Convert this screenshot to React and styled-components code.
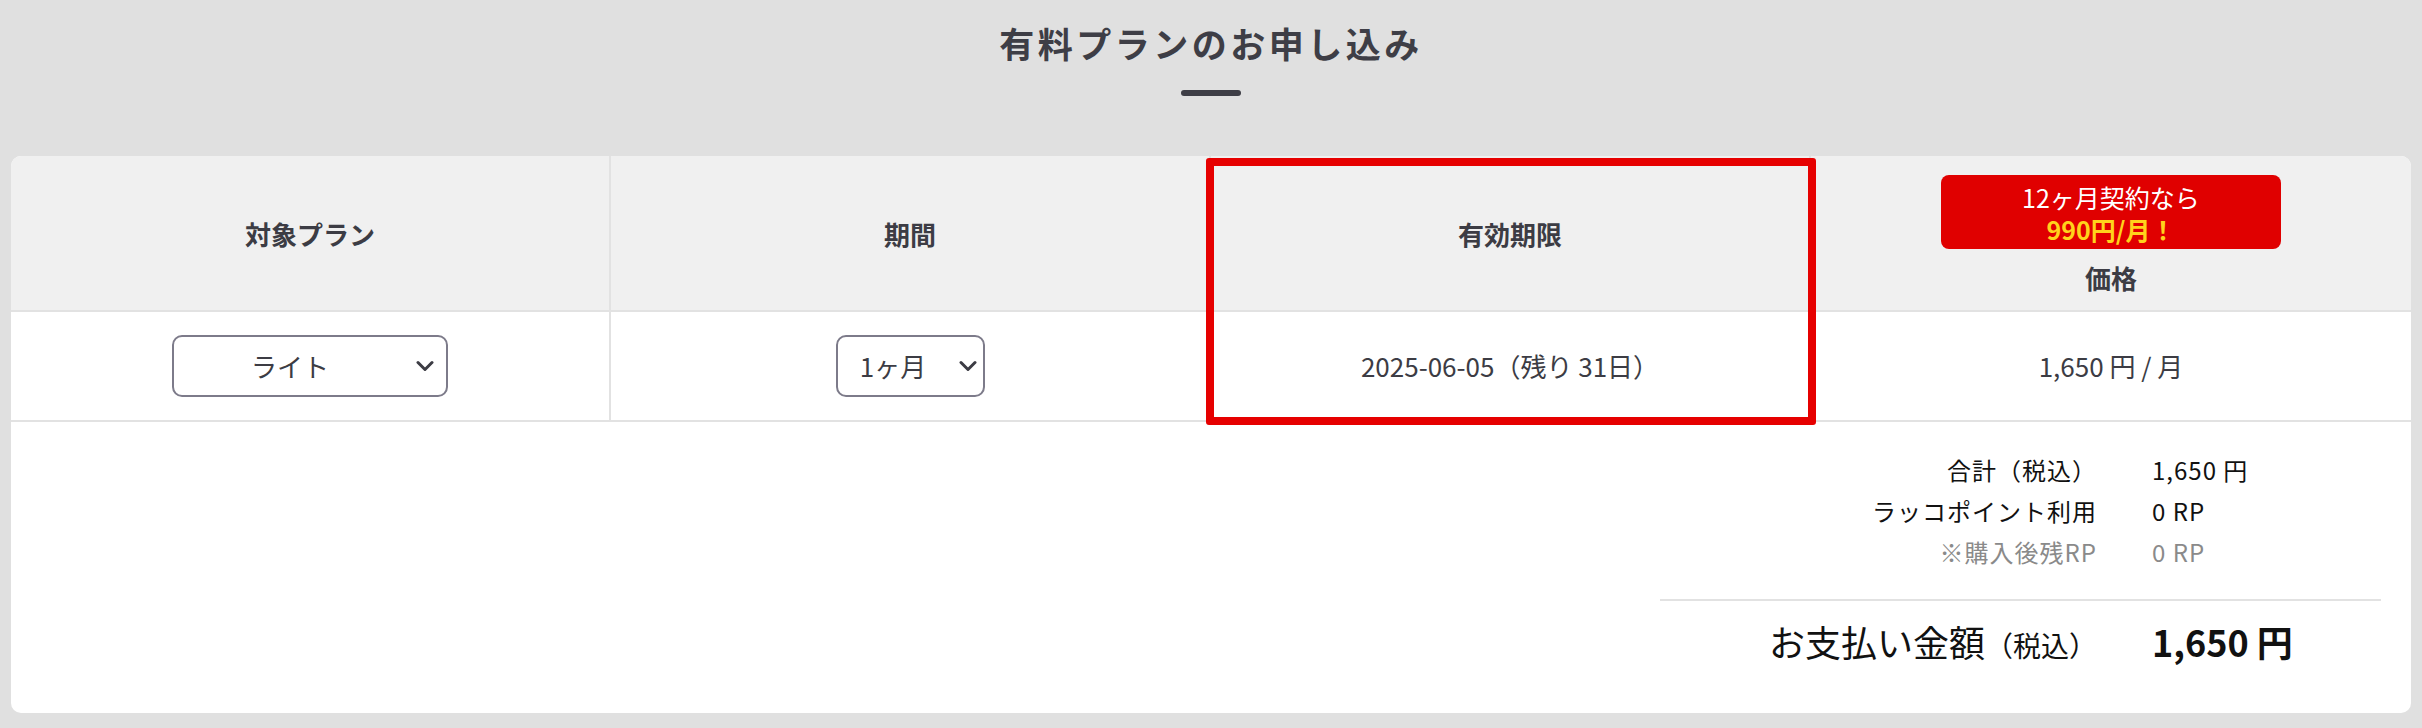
import React from "react";
import styled, { createGlobalStyle } from "styled-components";

const GlobalStyle = createGlobalStyle`
  * { box-sizing: border-box; }
  html, body { margin: 0; padding: 0; }
  body {
    background: #e0e0e0;
    font-family: "Noto Sans CJK JP", "Noto Sans", "Liberation Sans", sans-serif;
    color: #3c3c44;
  }
`;

const Page = styled.main`
  padding: 18px 11px 16px;
`;

const Title = styled.h1`
  margin: 0;
  text-align: center;
  font-size: 35px;
  line-height: 50px;
  font-weight: 700;
  letter-spacing: 3.5px;
  color: #3e3e46;
`;

const TitleBar = styled.div`
  width: 60px;
  height: 6px;
  border-radius: 3px;
  background: #3e3e46;
  margin: 22px auto 60px;
`;

const Card = styled.section`
  background: #fff;
  border-radius: 10px;
  overflow: hidden;
`;

const PlanTable = styled.div`
  display: grid;
  grid-template-columns: repeat(4, 1fr);
  grid-template-rows: 156px 110px;
`;

const Cell = styled.div`
  grid-column: ${(p) => p.$col};
  grid-row: ${(p) => p.$row};
  display: flex;
  flex-direction: column;
  align-items: center;
  justify-content: center;
  border-bottom: 2px solid #e2e2e2;
  border-right: ${(p) => (p.$col < 4 ? "2px solid #e2e2e2" : "none")};
`;

const HeadCell = styled(Cell)`
  background: #f0f0f0;
  gap: 9px;
  padding-top: ${(p) => p.$padTop || 0}px;
`;

const BodyCell = styled(Cell)`
  background: #fff;
  font-size: 26px;
  line-height: 38px;
  color: #3c3c44;
`;

const HeadLabel = styled.span`
  font-size: 26px;
  line-height: 39px;
  font-weight: 700;
  color: #3c3c44;
`;

const Highlight = styled.div`
  grid-column: 3;
  grid-row: 1 / span 2;
  margin: 2px -5px -3px -5px;
  border: 8px solid #e60000;
  border-radius: 3px;
  pointer-events: none;
  z-index: 1;
`;

const Badge = styled.div`
  width: 340px;
  height: 74px;
  border-radius: 8px;
  background: #e00000;
  padding: 6px 0 4px;
  display: flex;
  flex-direction: column;
  align-items: center;
  justify-content: center;
  font-size: 25px;
  line-height: 32px;
`;

const BadgeLine = styled.span`
  display: block;
  color: ${(p) => (p.$accent ? "#ffd21c" : "#ffffff")};
  font-weight: ${(p) => (p.$accent ? 700 : 400)};
`;

const SelectBox = styled.div`
  width: ${(p) => p.$width}px;
  height: 62px;
  border: 2px solid #7d7b8a;
  border-radius: 10px;
  display: flex;
  align-items: center;
  padding-right: ${(p) => p.$pr}px;
  font-size: 26px;
  color: #3c3c44;
  background: #fff;
`;

const SelectText = styled.span`
  flex: 1;
  text-align: center;
`;

const Chevron = styled.svg`
  width: 18px;
  height: 12px;
  margin-left: 10px;
  flex: none;
`;

const Summary = styled.div`
  display: flex;
  justify-content: flex-end;
  padding: 27px 30px 40px;
`;

const SummaryGrid = styled.div`
  width: 721px;
  display: grid;
  grid-template-columns: 437px 1fr;
  column-gap: 55px;
  font-size: 24px;
  line-height: 41px;
  letter-spacing: 1px;
`;

const SumLabel = styled.div`
  text-align: right;
  color: ${(p) => (p.$muted ? "#8a8a8a" : "#111")};
`;

const SumValue = styled.div`
  color: ${(p) => (p.$muted ? "#8a8a8a" : "#111")};
`;

const Divider = styled.div`
  grid-column: 1 / -1;
  height: 2px;
  background: #e2e2e2;
  margin: 27px 0 12px;
`;

const TotalLabel = styled.div`
  text-align: right;
  font-size: 36px;
  line-height: 56px;
  letter-spacing: 0;
  color: #111;
`;

const TaxNote = styled.span`
  font-size: 28px;
`;

const TotalValue = styled.div`
  font-size: 36px;
  line-height: 56px;
  font-weight: 700;
  letter-spacing: 0;
  color: #111;
`;

const ChevronIcon = () => (
  <Chevron viewBox="0 0 18 12" aria-hidden="true">
    <polyline
      points="2,2.5 9,9.5 16,2.5"
      fill="none"
      stroke="#3c3c44"
      strokeWidth="3"
      strokeLinecap="round"
      strokeLinejoin="round"
    />
  </Chevron>
);

const Select = ({ value, width, pr }) => (
  <SelectBox $width={width} $pr={pr} role="combobox">
    <SelectText>{value}</SelectText>
    <ChevronIcon />
  </SelectBox>
);

export default function App() {
  return (
    <>
      <GlobalStyle />
      <Page>
        <Title>有料プランのお申し込み</Title>
        <TitleBar />
        <Card>
          <PlanTable>
            <HeadCell $col={1} $row={1}>
              <HeadLabel>対象プラン</HeadLabel>
            </HeadCell>
            <HeadCell $col={2} $row={1}>
              <HeadLabel>期間</HeadLabel>
            </HeadCell>
            <HeadCell $col={3} $row={1}>
              <HeadLabel>有効期限</HeadLabel>
            </HeadCell>
            <HeadCell $col={4} $row={1} $padTop={5}>
              <Badge>
                <BadgeLine>12ヶ月契約なら</BadgeLine>
                <BadgeLine $accent>990円/月！</BadgeLine>
              </Badge>
              <HeadLabel>価格</HeadLabel>
            </HeadCell>
            <BodyCell $col={1} $row={2}>
              <Select value="ライト" width={276} pr={12} />
            </BodyCell>
            <BodyCell $col={2} $row={2}>
              <Select value="1ヶ月" width={149} pr={6} />
            </BodyCell>
            <BodyCell $col={3} $row={2}>2025-06-05（残り 31日）</BodyCell>
            <BodyCell $col={4} $row={2}>1,650 円 / 月</BodyCell>
            <Highlight />
          </PlanTable>
          <Summary>
            <SummaryGrid>
              <SumLabel>合計（税込）</SumLabel>
              <SumValue>1,650 円</SumValue>
              <SumLabel>ラッコポイント利用</SumLabel>
              <SumValue>0 RP</SumValue>
              <SumLabel $muted>※購入後残RP</SumLabel>
              <SumValue $muted>0 RP</SumValue>
              <Divider />
              <TotalLabel>
                お支払い金額<TaxNote>（税込）</TaxNote>
              </TotalLabel>
              <TotalValue>1,650 円</TotalValue>
            </SummaryGrid>
          </Summary>
        </Card>
      </Page>
    </>
  );
}
